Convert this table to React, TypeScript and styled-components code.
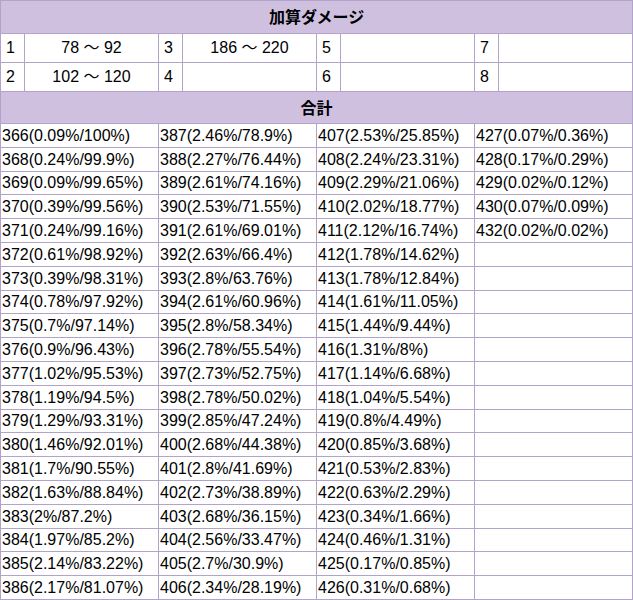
import React from "react";
import styled, { createGlobalStyle } from "styled-components";

const Global = createGlobalStyle`
  html, body { margin: 0; padding: 0; background: #fff; }
  body { font-family: "Liberation Sans", Arial, "Noto Sans CJK JP", sans-serif; color: #000; }
`;

const BORDER = "#b2a3ca";

const Table = styled.table`
  width: 631px;
  border-collapse: collapse;
  table-layout: fixed;
  font-size: 16px;
  line-height: 18px;
`;

const HeadRow = styled.tr<{ $h: number }>`
  height: ${(p) => p.$h}px;
`;

const HeadCell = styled.th`
  background: #cfc0e0;
  border: 1px solid ${BORDER};
  font-weight: bold;
  text-align: center;
  padding: 0 0 2px;
  font-family: "Noto Sans CJK JP", "Liberation Sans", sans-serif;
  font-size: 16px;
`;

const NumRow = styled.tr`
  height: 29px;
`;

const IndexCell = styled.td`
  border: 1px solid ${BORDER};
  padding: 0 0 0 5px;
  text-align: left;
`;

const RangeCell = styled.td`
  border: 1px solid ${BORDER};
  padding: 0;
  text-align: center;
`;

const DataRow = styled.tr`
  height: 23.8px;
`;

const DataCell = styled.td`
  border: 1px solid ${BORDER};
  padding: 1px 0 0 1px;
  white-space: nowrap;
  overflow: hidden;
`;

const NarrowCol = styled.col`
  width: 24px;
`;
const WideCol = styled.col`
  width: 134px;
`;

const Tail = styled.table`
  width: 631px;
  border-collapse: collapse;
  table-layout: fixed;
`;

const TailCell = styled.td<{ $w: number }>`
  width: ${(p) => p.$w}px;
  height: 6px;
  border-left: 1px solid ${BORDER};
  border-right: 1px solid ${BORDER};
  padding: 0;
`;

const ranges: [string, string][][] = [
  [
    ["1", "78 ～ 92"],
    ["3", "186 ～ 220"],
    ["5", ""],
    ["7", ""],
  ],
  [
    ["2", "102 ～ 120"],
    ["4", ""],
    ["6", ""],
    ["8", ""],
  ],
];

const columns: string[][] = [
  [
    "366(0.09%/100%)",
    "368(0.24%/99.9%)",
    "369(0.09%/99.65%)",
    "370(0.39%/99.56%)",
    "371(0.24%/99.16%)",
    "372(0.61%/98.92%)",
    "373(0.39%/98.31%)",
    "374(0.78%/97.92%)",
    "375(0.7%/97.14%)",
    "376(0.9%/96.43%)",
    "377(1.02%/95.53%)",
    "378(1.19%/94.5%)",
    "379(1.29%/93.31%)",
    "380(1.46%/92.01%)",
    "381(1.7%/90.55%)",
    "382(1.63%/88.84%)",
    "383(2%/87.2%)",
    "384(1.97%/85.2%)",
    "385(2.14%/83.22%)",
    "386(2.17%/81.07%)",
  ],
  [
    "387(2.46%/78.9%)",
    "388(2.27%/76.44%)",
    "389(2.61%/74.16%)",
    "390(2.53%/71.55%)",
    "391(2.61%/69.01%)",
    "392(2.63%/66.4%)",
    "393(2.8%/63.76%)",
    "394(2.61%/60.96%)",
    "395(2.8%/58.34%)",
    "396(2.78%/55.54%)",
    "397(2.73%/52.75%)",
    "398(2.78%/50.02%)",
    "399(2.85%/47.24%)",
    "400(2.68%/44.38%)",
    "401(2.8%/41.69%)",
    "402(2.73%/38.89%)",
    "403(2.68%/36.15%)",
    "404(2.56%/33.47%)",
    "405(2.7%/30.9%)",
    "406(2.34%/28.19%)",
  ],
  [
    "407(2.53%/25.85%)",
    "408(2.24%/23.31%)",
    "409(2.29%/21.06%)",
    "410(2.02%/18.77%)",
    "411(2.12%/16.74%)",
    "412(1.78%/14.62%)",
    "413(1.78%/12.84%)",
    "414(1.61%/11.05%)",
    "415(1.44%/9.44%)",
    "416(1.31%/8%)",
    "417(1.14%/6.68%)",
    "418(1.04%/5.54%)",
    "419(0.8%/4.49%)",
    "420(0.85%/3.68%)",
    "421(0.53%/2.83%)",
    "422(0.63%/2.29%)",
    "423(0.34%/1.66%)",
    "424(0.46%/1.31%)",
    "425(0.17%/0.85%)",
    "426(0.31%/0.68%)",
  ],
  [
    "427(0.07%/0.36%)",
    "428(0.17%/0.29%)",
    "429(0.02%/0.12%)",
    "430(0.07%/0.09%)",
    "432(0.02%/0.02%)",
  ],
];

const rowCount = 20;

export default function App() {
  return (
    <>
      <Global />
      <Table>
        <colgroup>
          {[0, 1, 2, 3].map((i) => (
            <React.Fragment key={i}>
              <NarrowCol />
              <WideCol />
            </React.Fragment>
          ))}
        </colgroup>
        <tbody>
          <HeadRow $h={33}>
            <HeadCell colSpan={8}>加算ダメージ</HeadCell>
          </HeadRow>
          {ranges.map((row, ri) => (
            <NumRow key={ri}>
              {row.map(([n, r]) => (
                <React.Fragment key={n}>
                  <IndexCell>{n}</IndexCell>
                  <RangeCell>{r}</RangeCell>
                </React.Fragment>
              ))}
            </NumRow>
          ))}
          <HeadRow $h={32}>
            <HeadCell colSpan={8}>合計</HeadCell>
          </HeadRow>
          {Array.from({ length: rowCount }).map((_, r) => (
            <DataRow key={r}>
              {columns.map((col, c) => (
                <DataCell key={c} colSpan={2}>
                  {col[r] ?? ""}
                </DataCell>
              ))}
            </DataRow>
          ))}
        </tbody>
      </Table>
      <Tail>
        <tbody>
          <tr>
            <TailCell $w={42} />
            <TailCell $w={180} />
            <TailCell $w={190} />
            <TailCell $w={219} />
          </tr>
        </tbody>
      </Tail>
    </>
  );
}
